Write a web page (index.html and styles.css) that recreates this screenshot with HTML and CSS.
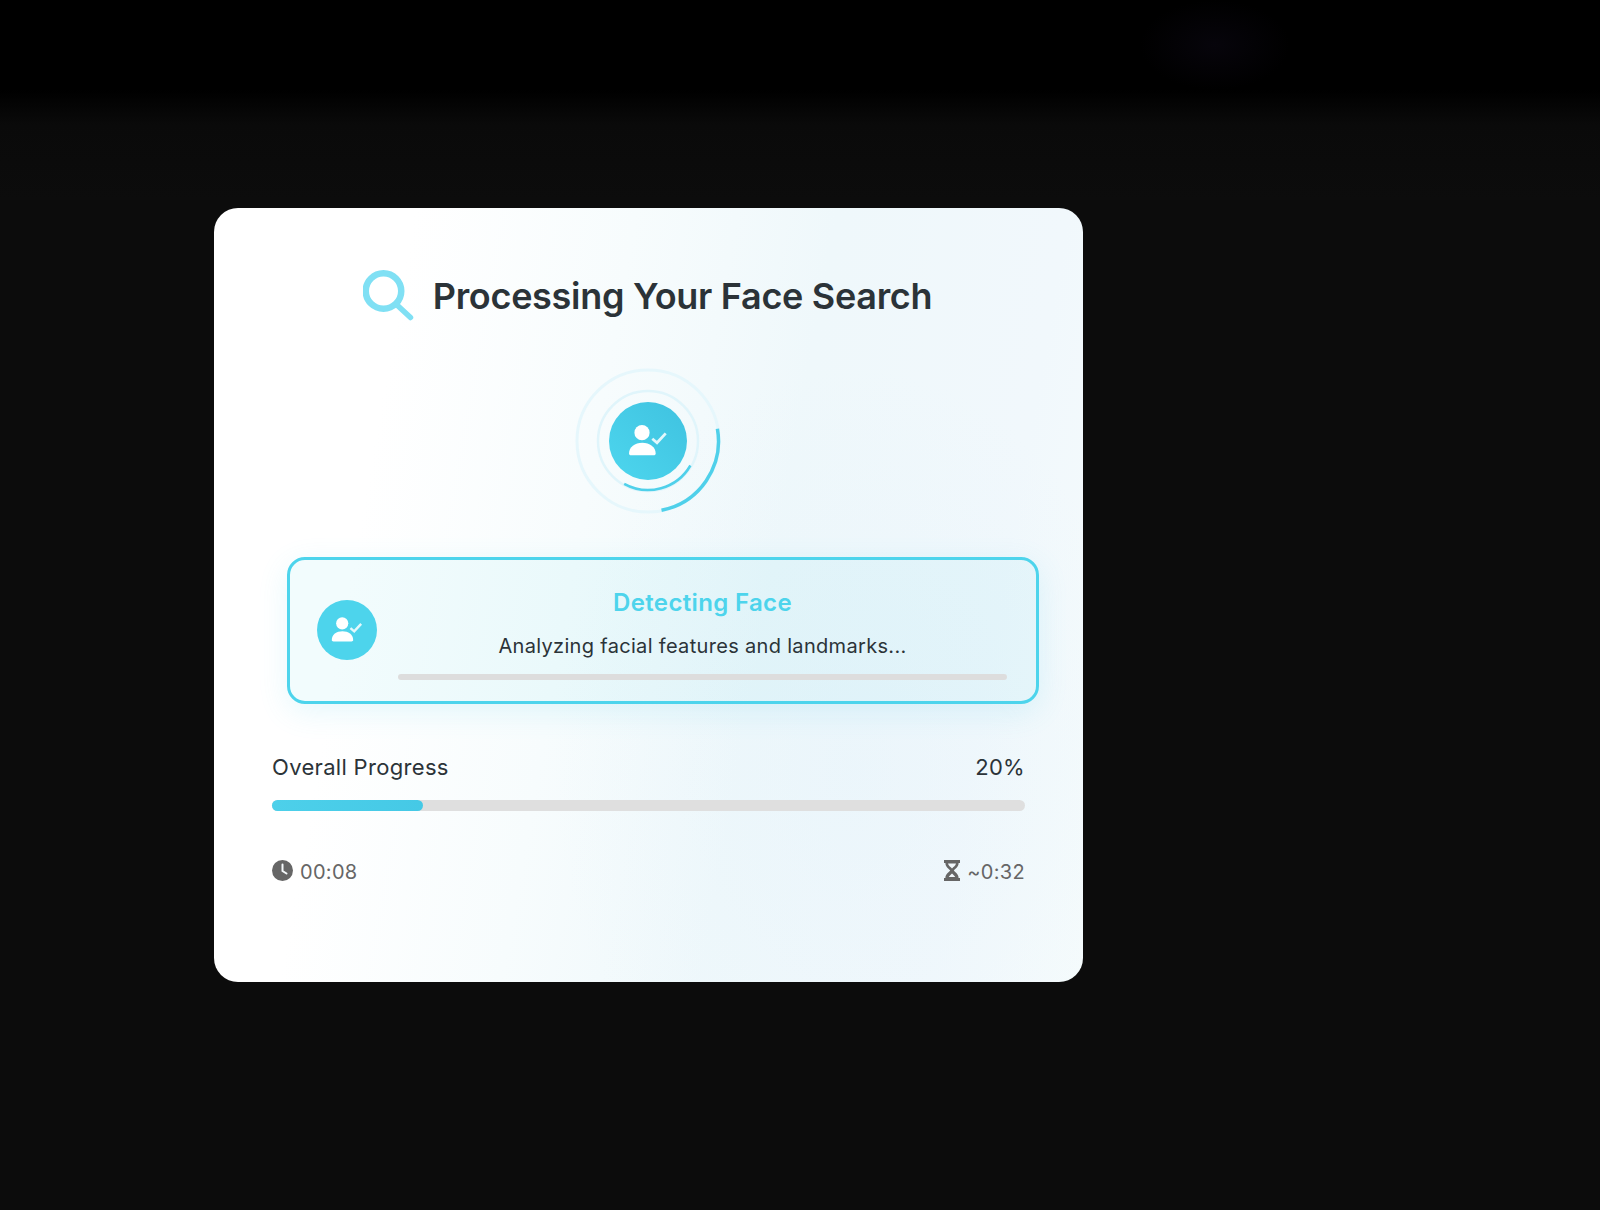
FILE: index.html
```html
<!DOCTYPE html>
<html>

<head>
    <meta charset="utf-8">
    <meta name="viewport" content="width=device-width, initial-scale=1">
    <title>Processing Your Face Search</title>
    <link rel="stylesheet" href="styles.css">
</head>

<body>
    <div class="card">
        <div class="title-row">
            <svg class="search-icon" width="52" height="60" viewBox="0 0 52 60">
                <circle cx="20.5" cy="22" r="17.75" fill="none" stroke="#80e0f4" stroke-width="6.5" />
                <path d="M34 36 L47.5 48.5" fill="none" stroke="#80e0f4" stroke-width="5.5" stroke-linecap="round" />
            </svg>
            <h1>Processing Your Face Search</h1>
        </div>

        <div class="spinner">
            <svg width="150" height="150" viewBox="0 0 150 150">
                <circle cx="75" cy="75" r="71" fill="none" stroke="#e6f7fc" stroke-width="3" />
                <circle cx="75" cy="75" r="50" fill="none" stroke="#e0f5fb" stroke-width="2.5" />
                <path d="M144.4 62.8 A70.5 70.5 0 0 1 88.5 144.2" fill="none" stroke="#4fd0ea" stroke-width="3.5" />
                <path d="M117.4 99.5 A49 49 0 0 1 51.2 117.8" fill="none" stroke="#4fd0ea" stroke-width="2.5" />
            </svg>
            <div class="spinner-disc">
                <svg width="40" height="40" viewBox="0 0 40 40">
                    <circle cx="14" cy="11.7" r="7.6" fill="#fff" />
                    <path d="M1 32.5C1 26 7 21.7 14.3 21.7S27.7 26 27.7 32.5c0 1.2-.8 1.8-2 1.8H3c-1.2 0-2-.6-2-1.8z" fill="#fff" />
                    <path d="M24.3 17.7l4.7 4 8.7-9.3" fill="none" stroke="#fff" stroke-opacity="0.85" stroke-width="2.8" />
                </svg>
            </div>
        </div>

        <div class="step">
            <div class="step-icon">
                <svg width="32" height="32" viewBox="0 0 40 40">
                    <circle cx="14" cy="11.7" r="7.6" fill="#fff" />
                    <path d="M1 32.5C1 26 7 21.7 14.3 21.7S27.7 26 27.7 32.5c0 1.2-.8 1.8-2 1.8H3c-1.2 0-2-.6-2-1.8z" fill="#fff" />
                    <path d="M24.3 17.7l4.7 4 8.7-9.3" fill="none" stroke="#fff" stroke-opacity="0.85" stroke-width="3" />
                </svg>
            </div>
            <div class="step-body">
                <h2>Detecting Face</h2>
                <p>Analyzing facial features and landmarks...</p>
                <div class="step-bar"></div>
            </div>
        </div>

        <div class="progress-row">
            <span>Overall Progress</span>
            <span>20%</span>
        </div>
        <div class="progress-track">
            <div class="progress-fill" style="width: 20%"></div>
        </div>

        <div class="time-row">
            <div class="time">
                <svg width="21" height="21" viewBox="0 0 21 21">
                    <circle cx="10.5" cy="10.5" r="10.5" fill="#666" />
                    <path d="M10.5 4.5 V11 L14.5 13.5" fill="none" stroke="#f4f8fa" stroke-width="2" stroke-linecap="round" />
                </svg>
                <span>00:08</span>
            </div>
            <div class="time">
                <svg width="16" height="21" viewBox="0 0 16 21">
                    <path d="M0 0 H16 V3 H14.6 C14.6 7 11.5 8.5 9.8 10.5 C11.5 12.5 14.6 14 14.6 18 H16 V21 H0 V18 H1.4 C1.4 14 4.5 12.5 6.2 10.5 C4.5 8.5 1.4 7 1.4 3 H0 Z" fill="#666" />
                    <path d="M4 3.5 H12 C11.6 5.5 9.5 7 8 8.5 C6.5 7 4.4 5.5 4 3.5 Z" fill="#f1f7fb" />
                    <path d="M8 13.5 C9.5 15 10.8 16 11.2 17 H4.8 C5.2 16 6.5 15 8 13.5 Z" fill="#f1f7fb" />
                </svg>
                <span>~0:32</span>
            </div>
        </div>
    </div>
</body>

</html>
```

FILE: styles.css
```css
html,
body {
    height: 100%;
}

body {
    margin: 0;
    overflow: hidden;
    font-family: Inter, "Noto Sans", sans-serif;
    background-color: #0c0c0c;
    background-image:
        radial-gradient(ellipse 75px 45px at 1215px 45px, rgba(26, 18, 44, 0.25), transparent),
        linear-gradient(to bottom, #000 0, #000 90px, #0a0a0a 125px, #0c0c0c 200px);
}

.card {
    box-sizing: border-box;
    width: 869px;
    height: 774px;
    margin: 208px 0 0 214px;
    padding: 58px 58px 0 58px;
    border-radius: 24px;
    background-color: #fff;
    background-image:
        radial-gradient(ellipse 300px 400px at 640px 560px, rgba(224, 240, 250, 0.3), transparent),
        linear-gradient(100deg, #fff 20%, #f7fcfd 42%, #eff8fb 62%, #f1f8fc 85%, #f5fbfc 100%);
}

.title-row {
    display: flex;
    align-items: center;
    justify-content: center;
    gap: 18px;
    height: 60px;
    padding-right: 2px;
}

.search-icon {
    flex: none;
    position: relative;
    top: 3px;
}

h1 {
    margin: 0;
    font-size: 36px;
    font-weight: 600;
    letter-spacing: -0.3px;
    color: #2b3338;
}

.spinner {
    position: relative;
    width: 150px;
    height: 150px;
    margin: 40px 0 0 301px;
}

.spinner svg {
    display: block;
}

.spinner-disc {
    position: absolute;
    top: 36px;
    left: 36px;
    width: 78px;
    height: 78px;
    display: flex;
    align-items: center;
    justify-content: center;
    border-radius: 50%;
    background: linear-gradient(45deg, #4dd6ee, #3fc2e0);
}

.step {
    box-sizing: border-box;
    display: flex;
    align-items: center;
    gap: 21px;
    width: 752px;
    height: 147px;
    margin: 41px -15px 0 15px;
    padding: 0 29px 0 27px;
    border: 3px solid #4dd4ec;
    border-radius: 18px;
    background: rgba(77, 208, 232, 0.07);
    box-shadow: 0 8px 30px rgba(77, 208, 232, 0.14);
}

.step-icon {
    flex: none;
    width: 60px;
    height: 60px;
    margin-bottom: 2px;
    display: flex;
    align-items: center;
    justify-content: center;
    border-radius: 50%;
    background: #4dd4ec;
}

.step-body {
    flex: 1;
    text-align: center;
    padding-top: 7px;
}

h2 {
    margin: 0;
    font-size: 24px;
    line-height: 30px;
    font-weight: 600;
    letter-spacing: 0.35px;
    color: #4dd4ec;
}

.step-body p {
    margin: 13px 0 0;
    font-size: 20px;
    line-height: 30px;
    letter-spacing: 0.32px;
    color: #2b3338;
}

.step-bar {
    height: 6px;
    margin-top: 13px;
    border-radius: 3px;
    background: #dddddd;
}

.progress-row {
    display: flex;
    justify-content: space-between;
    margin-top: 48px;
    font-size: 22px;
    line-height: 30px;
    letter-spacing: 0.32px;
    color: #2b3338;
}

.progress-track {
    height: 11px;
    margin-top: 18px;
    border-radius: 6px;
    background: #dfdfdf;
}

.progress-fill {
    height: 100%;
    border-radius: 6px;
    background: linear-gradient(to right, #4dd0ea, #45c9e6);
}

.time-row {
    display: flex;
    justify-content: space-between;
    margin-top: 46px;
    font-size: 20px;
    line-height: 30px;
    letter-spacing: 0.3px;
    color: #666;
}

.time {
    display: flex;
    align-items: center;
    gap: 7px;
}

.time svg {
    position: relative;
    top: -2px;
}
```
